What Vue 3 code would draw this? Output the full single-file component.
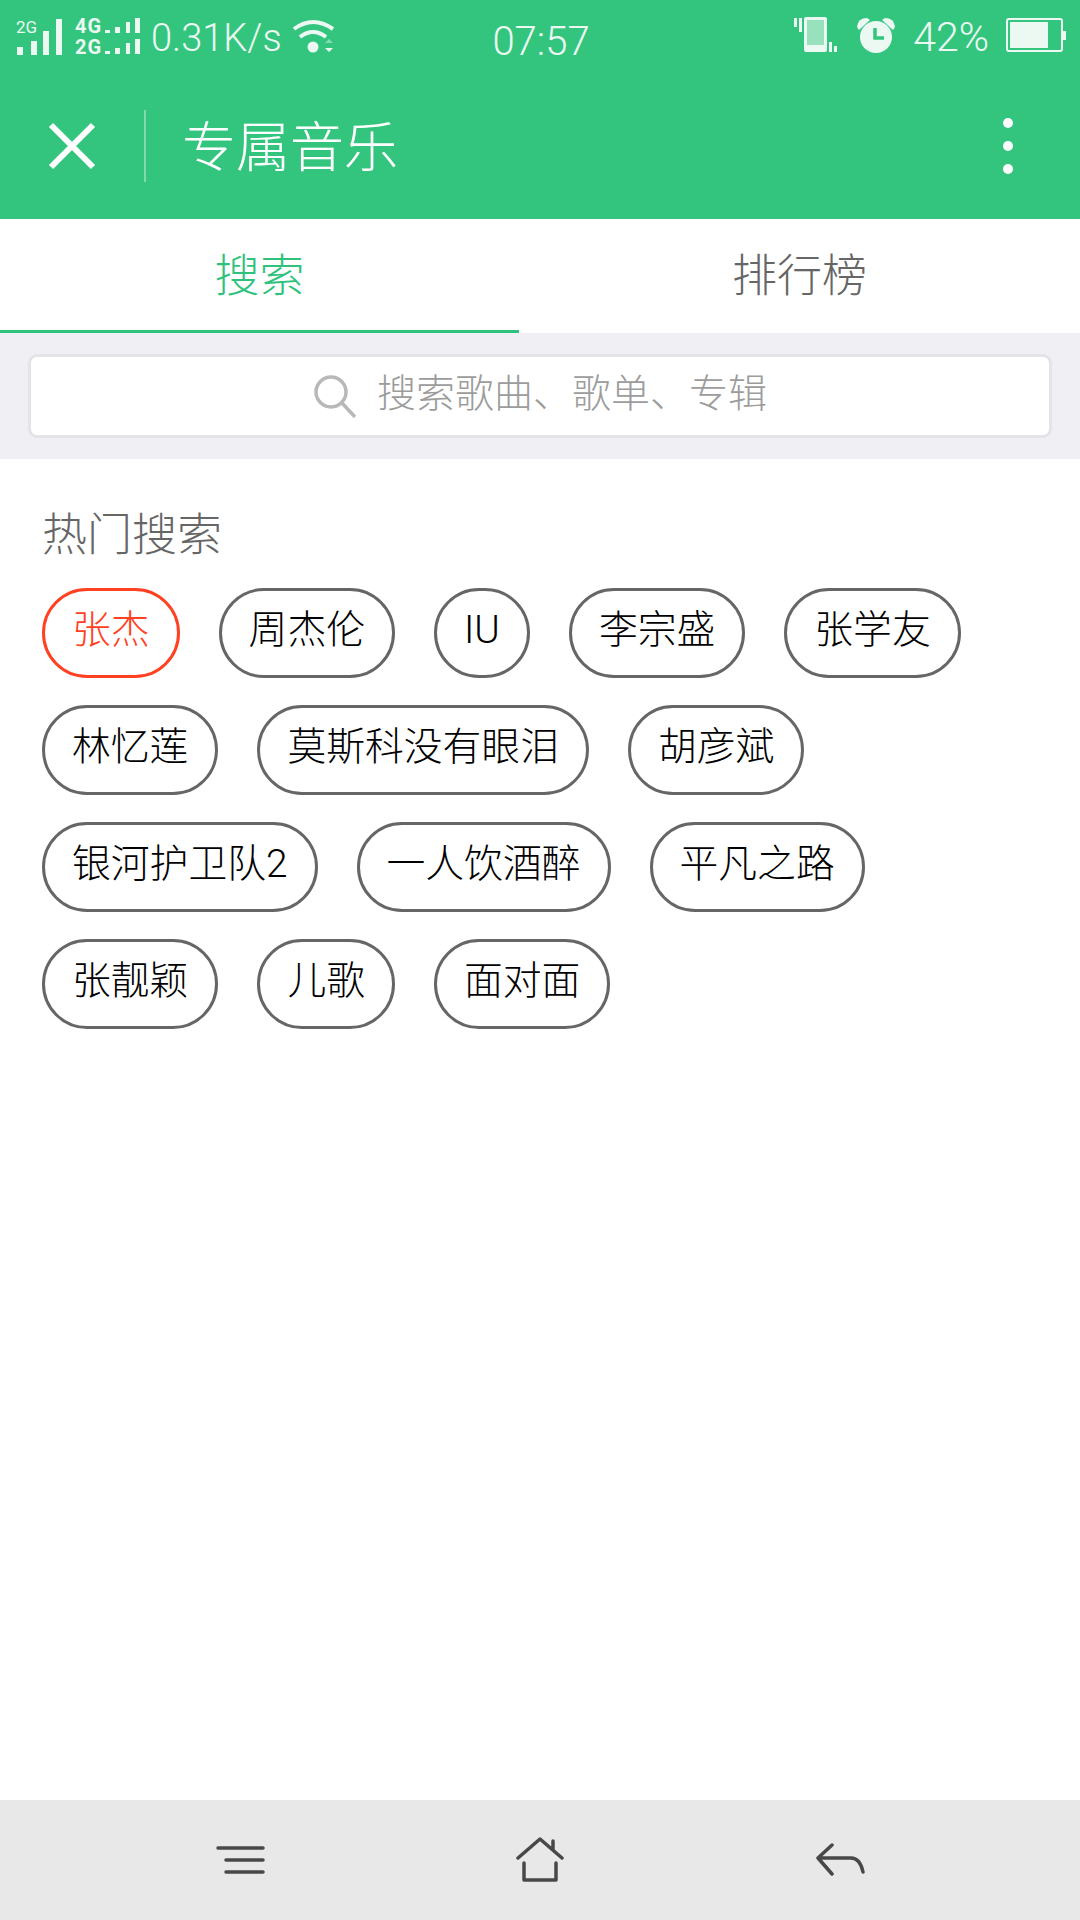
<template>
  <div class="page">
    <div class="top">
      <!-- status bar -->
      <div class="status">
        <div class="status-left">
          <svg class="sig" width="48" height="44" viewBox="0 0 48 44">
            <text x="0" y="18" class="sig-small">2G</text>
            <rect x="1" y="32" width="6" height="8" />
            <rect x="15" y="26" width="6" height="14" />
            <rect x="27" y="16" width="6" height="24" />
            <rect x="40" y="4" width="6" height="36" />
          </svg>
          <svg class="sig2" width="66" height="46" viewBox="0 0 66 46">
            <text x="0" y="19" class="sig-bold">4G</text>
            <text x="0" y="40" class="sig-bold">2G</text>
            <g v-for="y in [19, 40]" :key="y">
              <rect x="30" :y="y - 3" width="5" height="3" />
              <rect x="40" :y="y - 6" width="5" height="6" />
              <rect x="51" :y="y - 11" width="4" height="11" />
              <rect x="60" :y="y - 15" width="5" height="15" />
            </g>
          </svg>
          <span class="speed">0.31K/s</span>
          <svg class="wifi" width="44" height="36" viewBox="0 0 44 36">
            <path d="M2 10 Q21 -4 41 10" />
            <path d="M8 18 Q21 8 34 18" />
            <circle cx="21" cy="28" r="5.5" />
            <polygon points="33,24 37,20 41,24" opacity="0.45" />
            <polygon points="33,29 41,29 37,33" />
          </svg>
        </div>
        <div class="clock">07:57</div>
        <div class="status-right">
          <svg width="44" height="36" viewBox="0 0 44 36">
            <rect x="1" y="1" width="3" height="9" fill="#ecf9f3" />
            <rect x="6" y="1" width="3" height="14" fill="#ecf9f3" />
            <rect x="11" y="0" width="23" height="35" rx="2" fill="#ecf9f3" />
            <rect x="14" y="3" width="17" height="25" fill="#98e1bd" />
            <rect x="36" y="25" width="3" height="10" fill="#ecf9f3" />
            <rect x="41" y="29" width="3" height="6" fill="#ecf9f3" />
          </svg>
          <svg width="40" height="38" viewBox="0 0 40 38">
            <circle cx="20" cy="21" r="16" fill="#ecf9f3" />
            <path d="M1 11 Q2 2 11 2 L14 4 L3 14 Z" fill="#ecf9f3" />
            <path d="M39 11 Q38 2 29 2 L26 4 L37 14 Z" fill="#ecf9f3" />
            <path d="M19 12 V22 H28" fill="none" stroke="#33c57e" stroke-width="3.5" />
          </svg>
          <span class="batt-text">42%</span>
          <svg width="60" height="34" viewBox="0 0 60 34">
            <rect x="1" y="1" width="55" height="32" rx="2" fill="none" stroke="#ecf9f3" stroke-width="2" />
            <rect x="4" y="4" width="38" height="26" fill="#ecf9f3" />
            <rect x="57" y="13" width="3" height="9" fill="#ecf9f3" />
          </svg>
        </div>
      </div>

      <!-- title bar -->
      <div class="titlebar">
        <svg class="close" width="48" height="48" viewBox="0 0 48 48">
          <path d="M3 3 L45 45 M45 3 L3 45" />
        </svg>
        <div class="divider"></div>
        <div class="title">专属音乐</div>
        <div class="dots"><i></i><i></i><i></i></div>
      </div>
    </div>

    <div class="tabs">
      <div class="tab active">搜索</div>
      <div class="tab">排行榜</div>
    </div>

    <div class="search-wrap">
      <div class="search">
        <svg width="44" height="44" viewBox="0 0 44 44">
          <circle cx="18" cy="18" r="15" fill="none" stroke="#b8b8b8" stroke-width="3.5" />
          <path d="M29 29 L42 43" stroke="#b8b8b8" stroke-width="3.5" />
        </svg>
        <span class="placeholder">搜索歌曲、歌单、专辑</span>
      </div>
    </div>

    <div class="hot">
      <div class="hot-title">热门搜索</div>
      <div class="tags">
        <div v-for="(t, i) in tags" :key="t" class="tag" :class="{ first: i === 0 }">{{ t }}</div>
      </div>
    </div>

    <!-- nav bar -->
    <div class="nav">
      <div class="nav-cell">
        <svg width="50" height="30" viewBox="0 0 50 30">
          <path d="M3 3 H48 M11 15 H48 M11 27 H48" />
        </svg>
      </div>
      <div class="nav-cell">
        <svg width="50" height="46" viewBox="0 0 50 46">
          <path d="M3 21 L25 2 L47 21 M38 4 V13 M9 26 V43 H41 V26" />
        </svg>
      </div>
      <div class="nav-cell">
        <svg width="50" height="34" viewBox="0 0 50 34">
          <path d="M17 2 L3 15 L17 31 M3 15 H36 Q45 15 48 29" />
        </svg>
      </div>
    </div>
  </div>
</template>

<script setup>
const tags = [
  "张杰", "周杰伦", "IU", "李宗盛", "张学友",
  "林忆莲", "莫斯科没有眼泪", "胡彦斌",
  "银河护卫队2", "一人饮酒醉", "平凡之路",
  "张靓颖", "儿歌", "面对面"
]
</script>

<style>
html, body {
  margin: 0;
  background: #fff;
}
</style>

<style scoped>
.page {
  width: 1080px;
  height: 1920px;
  display: flex;
  flex-direction: column;
  background: #fff;
  font-family: "Roboto", "Noto Sans CJK SC", sans-serif;
  overflow: hidden;
}

.top {
  height: 219px;
  background: #33c57e;
  color: #fff;
}

.status {
  height: 70px;
  padding: 0 14px 0 16px;
  box-sizing: border-box;
  display: grid;
  grid-template-columns: 1fr auto 1fr;
  align-items: center;
  font-weight: 300;
  font-size: 38px;
  color: #ecf9f3;
}

.status-left,
.status-right {
  display: flex;
  align-items: center;
}

.status-left {
  padding-top: 4px;
}

.status-left svg {
  fill: #ecf9f3;
}

.sig {
  margin-right: 11px;
}

.sig-small {
  font: 400 17px "Roboto", sans-serif;
}

.sig-bold {
  font: 700 20px "Roboto", sans-serif;
  letter-spacing: 1px;
}

.speed {
  margin-left: 10px;
  padding-top: 2px;
  line-height: 44px;
}

.wifi {
  margin-left: 10px;
}

.wifi path {
  fill: none;
  stroke: #ecf9f3;
  stroke-width: 4;
}

.clock {
  margin-top: 12px;
  font-size: 40px;
  color: #ecf9f3;
}

.status-right {
  justify-content: flex-end;
  gap: 19px;
}

.batt-text {
  margin: 0 -2px;
  padding-top: 4px;
  font-size: 41px;
}

.titlebar {
  height: 149px;
  box-sizing: border-box;
  display: flex;
  align-items: center;
  padding: 3px 67px 0 48px;
}

.close {
  fill: none;
  stroke: #fff;
  stroke-width: 6;
  flex: none;
}

.divider {
  width: 2px;
  height: 72px;
  margin-left: 48px;
  background: #7fdbae;
}

.title {
  margin-left: 36px;
  flex: 1;
  padding-top: 5px;
  font-size: 54px;
  font-weight: 300;
  line-height: 72px;
}

.dots {
  display: flex;
  flex-direction: column;
  gap: 13px;
}

.dots i {
  display: block;
  width: 10px;
  height: 10px;
  border-radius: 50%;
  background: #fff;
}

.tabs {
  display: grid;
  grid-template-columns: 519px 1fr;
  height: 114px;
  flex: none;
}

.tab {
  display: flex;
  align-items: center;
  justify-content: center;
  font-size: 45px;
  font-weight: 300;
  color: #666;
  padding-bottom: 7px;
  box-sizing: border-box;
}

.tab.active {
  color: #2fc27c;
  border-bottom: 3px solid #2fc27c;
  padding-bottom: 4px;
}

.search-wrap {
  height: 126px;
  flex: none;
  box-sizing: border-box;
  padding: 21px 28px;
  background: #efeff4;
}

.search {
  height: 84px;
  box-sizing: border-box;
  border: 3px solid #e4e4e8;
  border-radius: 9px;
  background: #fff;
  display: flex;
  align-items: center;
  justify-content: center;
  gap: 20px;
  font-size: 39px;
  font-weight: 300;
  color: #9c9c9c;
}

.placeholder {
  padding-bottom: 5px;
  line-height: 52px;
}

.hot {
  flex: 1;
  padding: 47px 42px 0;
}

.hot-title {
  font-size: 45px;
  font-weight: 300;
  line-height: 60px;
  color: #666;
}

.tags {
  display: flex;
  flex-wrap: wrap;
  gap: 27px 39px;
  margin-top: 22px;
}

.tag {
  height: 90px;
  box-sizing: border-box;
  padding: 0 27px;
  border: 3px solid #666;
  border-radius: 45px;
  font-size: 38.8px;
  font-weight: 300;
  line-height: 77px;
  color: #000;
}

.tag.first {
  border-color: #ff4122;
  color: #ff4122;
}

.nav {
  height: 120px;
  flex: none;
  background: #e8e8e8;
  display: flex;
  padding: 0 90px;
}

.nav-cell {
  flex: 1;
  display: flex;
  align-items: center;
  justify-content: center;
}

.nav-cell path {
  fill: none;
  stroke: #484848;
  stroke-width: 3.5;
  stroke-linecap: round;
  stroke-linejoin: round;
}
</style>
